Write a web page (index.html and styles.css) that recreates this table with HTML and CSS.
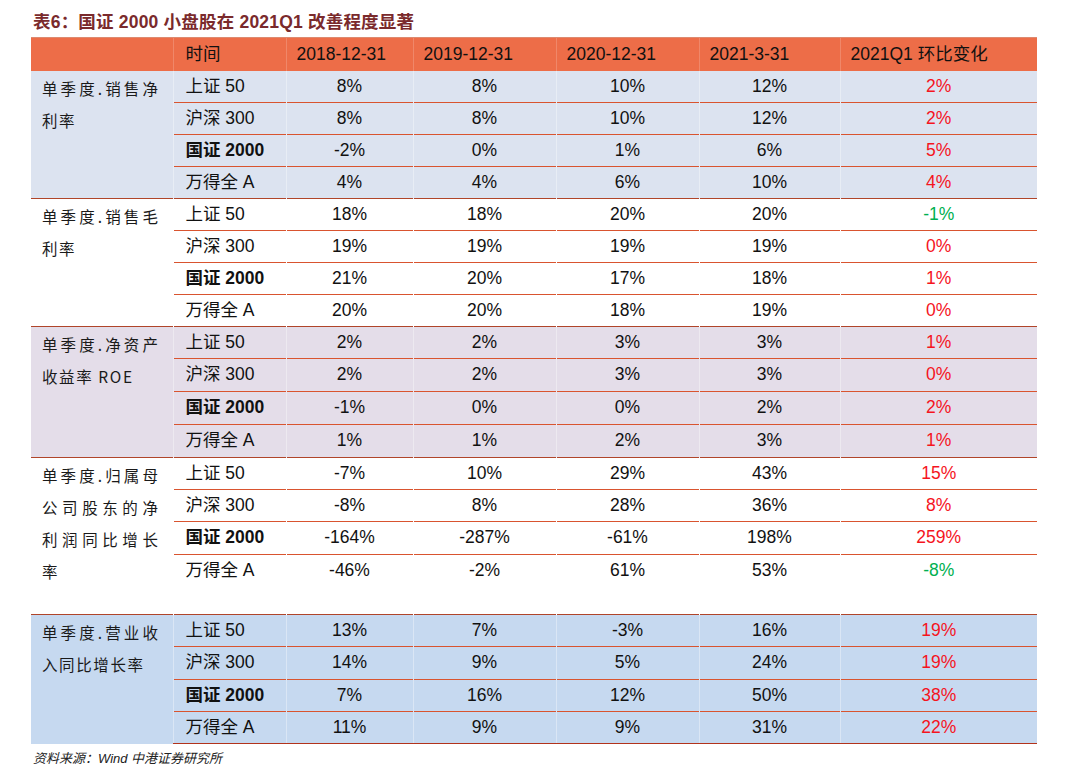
FILE: index.html
```html
<!DOCTYPE html>
<html lang="zh">
<head>
<meta charset="utf-8">
<title>表6</title>
<link rel="stylesheet" href="styles.css">
</head>
<body>
<div class="page">
  <h1 class="title">表6：国证 2000 小盘股在 2021Q1 改善程度显著</h1>
  <table class="tbl">
    <colgroup>
      <col class="c-lab"><col class="c-idx"><col class="c-a"><col class="c-b"><col class="c-b"><col class="c-d"><col class="c-e">
    </colgroup>
    <thead>
      <tr class="hrow">
        <th class="h-lab"></th>
        <th class="h-idx">时间</th>
        <th>2018-12-31</th>
        <th>2019-12-31</th>
        <th>2020-12-31</th>
        <th>2021-3-31</th>
        <th>2021Q1 环比变化</th>
      </tr>
    </thead>
    <tbody class="sec s1">
      <tr class="r32"><td class="lab" rowspan="4">单季度.销售净利率</td><td class="idx">上证 50</td><td>8%</td><td>8%</td><td>10%</td><td>12%</td><td class="up">2%</td></tr>
      <tr class="r32"><td class="idx">沪深 300</td><td>8%</td><td>8%</td><td>10%</td><td>12%</td><td class="up">2%</td></tr>
      <tr class="r32"><td class="idx b">国证 2000</td><td>-2%</td><td>0%</td><td>1%</td><td>6%</td><td class="up">5%</td></tr>
      <tr class="r32"><td class="idx">万得全 A</td><td>4%</td><td>4%</td><td>6%</td><td>10%</td><td class="up">4%</td></tr>
    </tbody>
    <tbody class="sec s2">
      <tr class="r32"><td class="lab" rowspan="4">单季度.销售毛利率</td><td class="idx">上证 50</td><td>18%</td><td>18%</td><td>20%</td><td>20%</td><td class="down">-1%</td></tr>
      <tr class="r32"><td class="idx">沪深 300</td><td>19%</td><td>19%</td><td>19%</td><td>19%</td><td class="up">0%</td></tr>
      <tr class="r32"><td class="idx b">国证 2000</td><td>21%</td><td>20%</td><td>17%</td><td>18%</td><td class="up">1%</td></tr>
      <tr class="r32"><td class="idx">万得全 A</td><td>20%</td><td>20%</td><td>18%</td><td>19%</td><td class="up">0%</td></tr>
    </tbody>
    <tbody class="sec s3">
      <tr class="r32"><td class="lab" rowspan="4">单季度.净资产收益率 ROE</td><td class="idx">上证 50</td><td>2%</td><td>2%</td><td>3%</td><td>3%</td><td class="up">1%</td></tr>
      <tr class="r33"><td class="idx">沪深 300</td><td>2%</td><td>2%</td><td>3%</td><td>3%</td><td class="up">0%</td></tr>
      <tr class="r33"><td class="idx b">国证 2000</td><td>-1%</td><td>0%</td><td>0%</td><td>2%</td><td class="up">2%</td></tr>
      <tr class="r33"><td class="idx">万得全 A</td><td>1%</td><td>1%</td><td>2%</td><td>3%</td><td class="up">1%</td></tr>
    </tbody>
    <tbody class="sec s4">
      <tr class="r32"><td class="lab" rowspan="4">单季度.归属母公司股东的净利润同比增长率</td><td class="idx">上证 50</td><td>-7%</td><td>10%</td><td>29%</td><td>43%</td><td class="up">15%</td></tr>
      <tr class="r32"><td class="idx">沪深 300</td><td>-8%</td><td>8%</td><td>28%</td><td>36%</td><td class="up">8%</td></tr>
      <tr class="r33"><td class="idx b">国证 2000</td><td>-164%</td><td>-287%</td><td>-61%</td><td>198%</td><td class="up">259%</td></tr>
      <tr class="r60"><td class="idx">万得全 A</td><td>-46%</td><td>-2%</td><td>61%</td><td>53%</td><td class="down">-8%</td></tr>
    </tbody>
    <tbody class="sec s5">
      <tr class="r32"><td class="lab" rowspan="4">单季度.营业收入同比增长率</td><td class="idx">上证 50</td><td>13%</td><td>7%</td><td>-3%</td><td>16%</td><td class="up">19%</td></tr>
      <tr class="r33"><td class="idx">沪深 300</td><td>14%</td><td>9%</td><td>5%</td><td>24%</td><td class="up">19%</td></tr>
      <tr class="r32"><td class="idx b">国证 2000</td><td>7%</td><td>16%</td><td>12%</td><td>50%</td><td class="up">38%</td></tr>
      <tr class="r32"><td class="idx">万得全 A</td><td>11%</td><td>9%</td><td>9%</td><td>31%</td><td class="up">22%</td></tr>
    </tbody>
  </table>
  <p class="source">资料来源：Wind 中港证券研究所</p>
</div>
</body>
</html>
```

FILE: styles.css
```css
html, body {
  margin: 0;
  padding: 0;
  background: #ffffff;
}

.page {
  padding: 10px 0 0 31px;
  font-family: "Liberation Sans", Arial, "Noto Sans CJK SC", sans-serif;
  color: #111111;
}

.title {
  margin: 0 0 3px 2px;
  font-size: 17.5px;
  line-height: 24px;
  font-weight: bold;
  color: #7a2a2c;
  letter-spacing: 0.2px;
}

.tbl {
  border-collapse: collapse;
  table-layout: fixed;
  width: 1006px;
  font-size: 17.5px;
}

.c-lab { width: 142px; }
.c-idx { width: 113px; }
.c-a { width: 127px; }
.c-b { width: 143px; }
.c-d { width: 141px; }
.c-e { width: 197px; }

.hrow {
  height: 33px;
  background: #ed6d48;
}

.hrow th {
  font-weight: normal;
  text-align: left;
  padding: 0 0 0 10px;
  line-height: 32px;
  vertical-align: middle;
  border-top: 1px solid #dd8a70;
  border-left: 1px solid rgba(255, 255, 255, 0.18);
  color: #111111;
  white-space: nowrap;
}

.hrow th.h-idx {
  padding-left: 12px;
}

.hrow th:first-child {
  border-left: none;
}

.r32 { height: 32px; }
.r33 { height: 33px; }
.r60 { height: 60px; }

.tbl td {
  padding: 0;
  line-height: 31px;
  vertical-align: top;
  text-align: center;
  border-top: 1px solid #d9542f;
  border-left: 1px solid rgba(255, 255, 255, 0.35);
  white-space: nowrap;
}

.sec tr:first-child td {
  border-top: 1px solid #b0452a;
}

.s1 tr:first-child td {
  border-top: none;
}

.s5 tr:last-child td {
  border-bottom: 1px solid #b2331b;
}

.tbl td.lab {
  text-align: justify;
  white-space: normal;
  padding: 1px 13px 0 11px;
  font-family: "Noto Sans CJK SC", sans-serif;
  font-size: 15.5px;
  line-height: 32px;
  letter-spacing: 1.6px;
  color: #1a1a1a;
  border-left: none;
}

.tbl td.idx {
  text-align: left;
  padding-left: 12px;
}

.tbl td.idx.b {
  font-weight: bold;
}

.s1 { background: #dce3f0; }
.s2 { background: #ffffff; }
.s3 { background: #e4dde9; }
.s4 { background: #ffffff; }
.s5 { background: #c6d9f0; }

.s2 td, .s4 td {
  border-left-color: transparent;
}

.up { color: #f5141e; }
.down { color: #00b050; }

.source {
  margin: 6px 0 0 2px;
  font-size: 13px;
  line-height: 18px;
  font-style: italic;
  color: #222222;
}
```
